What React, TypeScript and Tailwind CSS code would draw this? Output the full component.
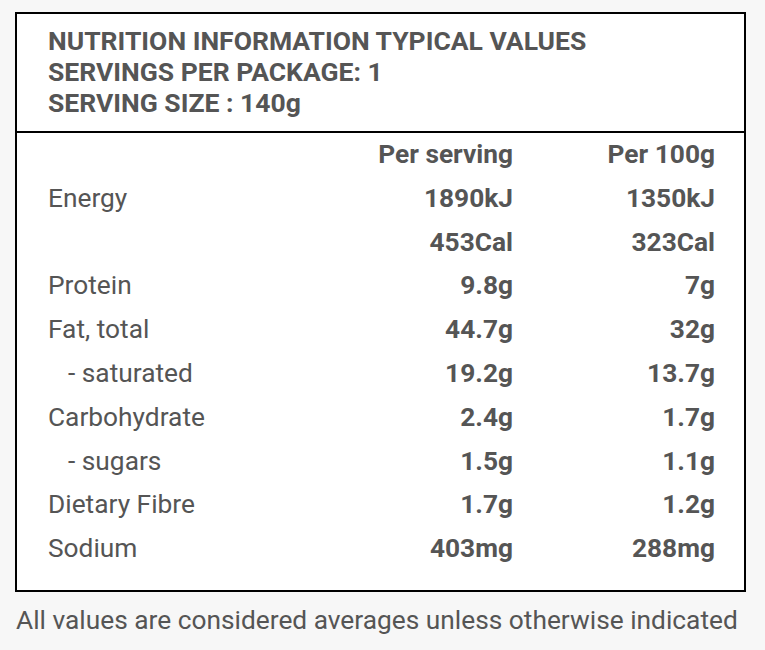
const rows: { label: string; serving: string; per100: string; indent?: boolean }[] = [
  { label: 'Energy', serving: '1890kJ', per100: '1350kJ' },
  { label: '', serving: '453Cal', per100: '323Cal' },
  { label: 'Protein', serving: '9.8g', per100: '7g' },
  { label: 'Fat, total', serving: '44.7g', per100: '32g' },
  { label: '- saturated', serving: '19.2g', per100: '13.7g', indent: true },
  { label: 'Carbohydrate', serving: '2.4g', per100: '1.7g' },
  { label: '- sugars', serving: '1.5g', per100: '1.1g', indent: true },
  { label: 'Dietary Fibre', serving: '1.7g', per100: '1.2g' },
  { label: 'Sodium', serving: '403mg', per100: '288mg' },
];

export default function App() {
  return (
    <div className="min-h-screen bg-[#f7f7f7] pl-[15px] pt-[12px] font-['Roboto',sans-serif] text-[#555]">
      <div className="w-[731px] border-2 border-black bg-white">
        <div className="border-b-2 border-black pb-[13px] pl-[31px] pt-[11px] text-[26.5px] font-bold leading-[31px]">
          <div>NUTRITION INFORMATION TYPICAL VALUES</div>
          <div>SERVINGS PER PACKAGE: 1</div>
          <div>SERVING SIZE : 140g</div>
        </div>
        <div className="pb-[19px] pl-[31px] pr-[29px] text-[26.3px] leading-[43.8px]">
          <div className="grid grid-cols-[1fr_202px_202px]">
            <div />
            <div className="text-right font-bold">Per serving</div>
            <div className="text-right font-bold">Per 100g</div>
          </div>
          {rows.map((r, i) => (
            <div key={i} className="grid grid-cols-[1fr_202px_202px]">
              <div className={r.indent ? 'pl-[20px]' : ''}>{r.label}</div>
              <div className="text-right font-bold">{r.serving}</div>
              <div className="text-right font-bold">{r.per100}</div>
            </div>
          ))}
        </div>
      </div>
      <p className="pl-[1px] pt-[13px] text-[26.3px] leading-[30px]">
        All values are considered averages unless otherwise indicated
      </p>
    </div>
  );
}
